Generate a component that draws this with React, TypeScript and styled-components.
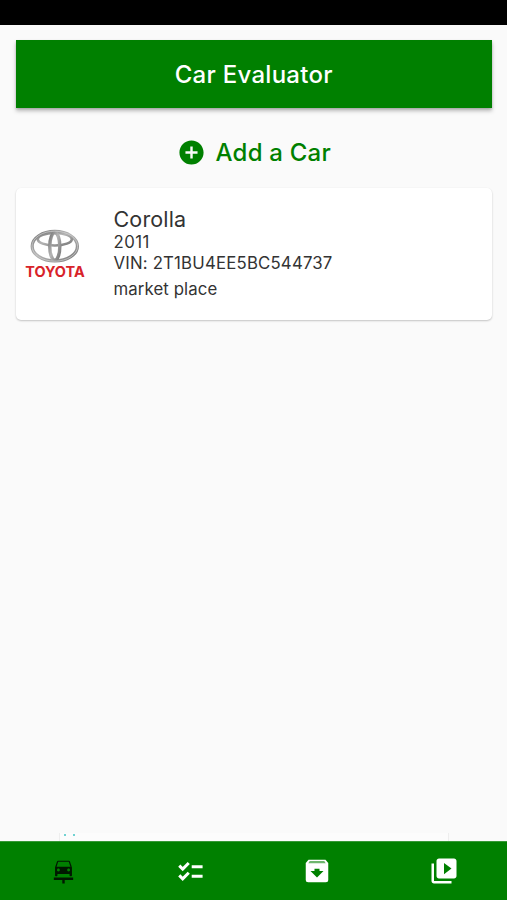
import React from 'react';
import styled, { createGlobalStyle } from 'styled-components';
import { MdAddCircle, MdCarRepair, MdVideoLibrary } from 'react-icons/md';

const GlobalStyle = createGlobalStyle`
  body {
    margin: 0;
    background: #fafafa;
    font-family: Inter, 'Liberation Sans', sans-serif;
  }
  * { box-sizing: border-box; }
`;

const Screen = styled.div`
  display: flex;
  flex-direction: column;
  height: 100vh;
  background: #fafafa;
`;

const StatusBar = styled.div`
  height: 25px;
  flex: none;
  background: #000;
`;

const Content = styled.main`
  flex: 1;
  display: flex;
  flex-direction: column;
  padding: 15px 15px 0 15.5px;
`;

const TitleBar = styled.header`
  height: 68px;
  padding-top: 2px;
  display: flex;
  align-items: center;
  justify-content: center;
  background: #008000;
  box-shadow: 0 3px 4px rgba(0, 0, 0, 0.26), 0 1px 2px rgba(0, 0, 0, 0.14);
`;

const Title = styled.h1`
  margin: 0;
  color: #fff;
  font-size: 24px;
  line-height: 30px;
  font-weight: 500;
  letter-spacing: 0.28px;
`;

const AddButton = styled.button`
  height: 80px;
  padding: 9px 0 0;
  display: flex;
  align-items: center;
  justify-content: center;
  gap: 10px;
  border: 0;
  background: none;
  color: #008000;
  font: 500 24px/30px Inter, sans-serif;
  letter-spacing: 0.22px;
`;

const Card = styled.article`
  height: 132px;
  display: flex;
  background: #fff;
  border-radius: 5px;
  box-shadow: 0 1px 2px rgba(0, 0, 0, 0.22), 0 0 1px rgba(0, 0, 0, 0.04);
`;

const LogoBox = styled.div`
  width: 98px;
  padding: 40px 0 0 8px;
`;

const Details = styled.div`
  padding-top: 18px;
  color: #333;
`;

const Model = styled.h2`
  margin: 0;
  font-size: 21.5px;
  line-height: 26px;
  font-weight: 400;
  letter-spacing: 0.15px;
`;

const Line = styled.p<{ $top?: number; $spacing?: number }>`
  margin: ${({ $top = 0 }) => $top}px 0 0;
  font-size: 16.8px;
  line-height: 21px;
  letter-spacing: ${({ $spacing = 0 }) => $spacing}px;
`;

const NavBar = styled.nav`
  height: 59px;
  flex: none;
  display: grid;
  grid-template-columns: repeat(4, 1fr);
  background: #008000;
  border-top: 1px solid #369936;
`;

const NavItem = styled.a<{ $active?: boolean }>`
  display: flex;
  align-items: center;
  justify-content: center;
  color: ${({ $active }) => ($active ? '#001800' : '#fff')};
`;

const Peek = styled.div`
  margin: auto 43px 0 43px;
  height: 8px;
  display: flex;
  gap: 7px;
  padding: 1px 0 0 4px;
  background: #fcfcfc;
  border-left: 1px solid #eee;
  border-right: 1px solid #eee;
`;

const Dot = styled.span`
  width: 2px;
  height: 2px;
  background: #70d2d2;
`;

function ToyotaLogo() {
  return (
    <svg width="62" height="52" viewBox="0 0 62 52" role="img" aria-label="Toyota">
      <defs>
        <linearGradient id="chrome" x1="0" y1="0" x2="1" y2="1">
          <stop offset="0" stopColor="#777" />
          <stop offset="0.45" stopColor="#b5b5b5" />
          <stop offset="1" stopColor="#777" />
        </linearGradient>
      </defs>
      <g fill="none" stroke="url(#chrome)">
        <ellipse cx="30.8" cy="18.2" rx="22.6" ry="14.8" strokeWidth="3.2" />
        <ellipse cx="30.8" cy="11.2" rx="17" ry="6.3" strokeWidth="2.6" />
        <ellipse cx="30.8" cy="18.4" rx="5" ry="13.8" strokeWidth="3.4" />
      </g>
      <ellipse cx="30.8" cy="18.2" rx="22.8" ry="15" fill="none" stroke="#ddd" strokeWidth="0.6" />
      <text
        x="1.2"
        y="49"
        fill="#d8232a"
        fontFamily="Inter, sans-serif"
        fontSize="14.2"
        fontWeight="700"
        textLength="59.5"
        lengthAdjust="spacingAndGlyphs"
      >
        TOYOTA
      </text>
    </svg>
  );
}

function ChecklistIcon() {
  return (
    <svg width="29" height="29" viewBox="0 0 24 24" fill="none" stroke="currentColor" strokeWidth="2.5">
      <path d="M13 8h9M13 16h9" />
      <path d="m2.7 7.2 2.85 2.8 5-5M2.7 15.2 5.55 18l5-5" />
    </svg>
  );
}

function ArchiveIcon() {
  return (
    <svg width="30" height="30" viewBox="0 0 24 24">
      <path
        fill="currentColor"
        d="M5.2 3h13.6L21 5.5V19a2 2 0 0 1-2 2H5a2 2 0 0 1-2-2V5.5z"
      />
      <path fill="#6eb66e" d="M6.2 4h11.6l1.2 1.7H5z" />
      <path fill="#008000" d="M12 17.2 6.8 12H10v-1.8h4V12h3.2z" />
    </svg>
  );
}

export default function App() {
  return (
    <>
      <GlobalStyle />
      <Screen>
        <StatusBar />
        <Content>
          <TitleBar>
            <Title>Car Evaluator</Title>
          </TitleBar>
          <AddButton>
            <MdAddCircle size={29} />
            Add a Car
          </AddButton>
          <Card>
            <LogoBox>
              <ToyotaLogo />
            </LogoBox>
            <Details>
              <Model>Corolla</Model>
              <Line $spacing={0.45}>2011</Line>
              <Line $spacing={0.18}>VIN: 2T1BU4EE5BC544737</Line>
              <Line $top={5} $spacing={0.1}>market place</Line>
            </Details>
          </Card>
          <Peek>
            <Dot />
            <Dot />
          </Peek>
        </Content>
        <NavBar>
          <NavItem $active>
            <MdCarRepair size={29} />
          </NavItem>
          <NavItem>
            <ChecklistIcon />
          </NavItem>
          <NavItem>
            <ArchiveIcon />
          </NavItem>
          <NavItem>
            <MdVideoLibrary size={30} />
          </NavItem>
        </NavBar>
      </Screen>
    </>
  );
}
